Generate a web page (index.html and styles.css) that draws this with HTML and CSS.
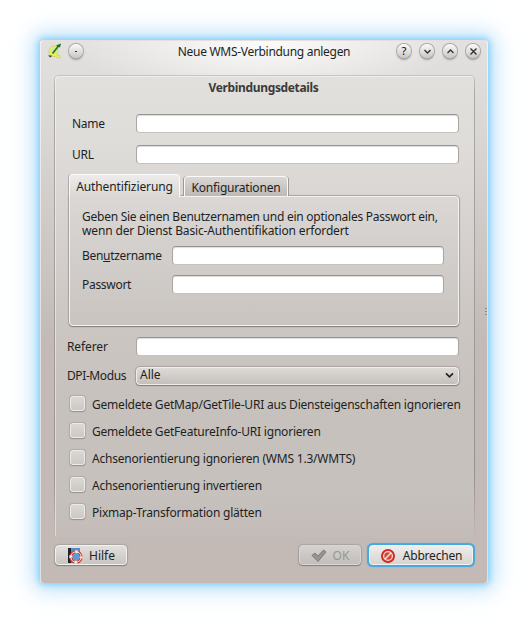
FILE: index.html
```html
<!DOCTYPE html>
<html lang="de">
<head>
<meta charset="utf-8">
<title>Neue WMS-Verbindung anlegen</title>
<link rel="stylesheet" href="styles.css">
</head>
<body>
<main class="window">
  <header class="titlebar">
    <svg class="app-icon" width="14" height="16" viewBox="0 0 14 16"><ellipse cx="5.500" cy="8.300" rx="3.300" ry="4.300" transform="rotate(20 5.500 8.300)" fill="none" stroke="#c3c960" stroke-width="3"/><path d="M6 10c1.500 2.500 3 5 6.500 3.500" fill="none" stroke="#c3c960" stroke-width="2.800"/><ellipse cx="5.500" cy="8.300" rx="3.300" ry="4.300" transform="rotate(20 5.500 8.300)" fill="#d9e8a0" stroke="#e6ee66" stroke-width="2"/><path d="M6 10c1.500 2.500 3 5 6.500 3.500" fill="none" stroke="#e6ee66" stroke-width="1.800"/><path d="M4.500 10.500 10.500 3" stroke="#1e7a2c" stroke-width="1.800"/><path d="M13 .5 8 2.500l4 2z" fill="#16702a"/><path d="M0 12.500h4l-1.500 2z" fill="#2c3a1c"/></svg>
    <span class="round pin"><i class="pin-dot"></i></span>
    <h1 class="title"><span>Neue WMS-Verbindung anlegen</span></h1>
    <span class="round"><b>?</b></span>
    <span class="round"><svg width="9" height="9" viewBox="0 0 9 9"><path d="M1.500 3 4.500 6l3-3"/></svg></span>
    <span class="round"><svg width="9" height="9" viewBox="0 0 9 9"><path d="m1.500 6 3-3 3 3"/></svg></span>
    <span class="round"><svg width="9" height="9" viewBox="0 0 9 9"><path d="m1.500 1.500 6 6m0-6-6 6"/></svg></span>
  </header>
  <section class="group">
    <h2 class="heading"><span>Verbindungsdetails</span></h2>
    <div class="row name"><label>Name</label><div class="field"></div></div>
    <div class="row url"><label>URL</label><div class="field"></div></div>
    <div class="tabs">
      <div class="tab active"><span>Authentifizierung</span></div>
      <div class="tab"><span>Konfigurationen</span></div>
    </div>
    <div class="panel">
      <p class="hint hint-one">Geben Sie einen Benutzernamen und ein optionales Passwort ein,</p>
      <p class="hint hint-two">wenn der Dienst Basic-Authentifikation erfordert</p>
      <div class="row user"><label>Ben<u>u</u>tzername</label><div class="field"></div></div>
      <div class="row pass"><label>Passwort</label><div class="field"></div></div>
    </div>
    <div class="row referer"><label>Referer</label><div class="field"></div></div>
    <div class="row dpi"><label>DPI-Modus</label><div class="combo"><span>Alle</span><svg width="9" height="7" viewBox="0 0 9 7"><path d="m1 1.300 3.500 3.500L8 1.300" fill="none" stroke="#222" stroke-width="1.700"/></svg></div></div>
    <div class="checks">
      <div class="check"><i></i><span>Gemeldete GetMap/GetTile-URI aus Diensteigenschaften ignorieren</span></div>
      <div class="check"><i></i><span>Gemeldete GetFeatureInfo-URI ignorieren</span></div>
      <div class="check"><i></i><span>Achsenorientierung ignorieren (WMS 1.3/WMTS)</span></div>
      <div class="check"><i></i><span>Achsenorientierung invertieren</span></div>
      <div class="check"><i></i><span>Pixmap-Transformation glätten</span></div>
    </div>
  </section>
  <footer class="buttons">
    <div class="button help"><svg width="16" height="16" viewBox="0 0 16 16"><path d="M1 0h12v15H1z" fill="#4d8fd0"/><path d="M1 0h3v15H1z" fill="#202328"/><circle cx="9" cy="9" r="5.200" fill="#5a9bd8" stroke="#d8402f" stroke-width="3"/><circle cx="9" cy="9" r="5.200" fill="none" stroke="#f7f1f0" stroke-width="3" stroke-dasharray="2.600 5.568" stroke-dashoffset="1.300"/><circle cx="9" cy="9" r="5.200" fill="none" stroke="#f3dcd8" stroke-width="1"/></svg><span>Hilfe</span></div>
    <div class="button ok"><svg width="16" height="14" viewBox="0 0 16 14"><path d="m1 6.500 3-2.500 3 3 5.500-6L15 3 7 12.500z" fill="#969492" stroke="#7d7b79"/></svg><span>OK</span></div>
    <div class="button cancel"><svg width="16" height="16" viewBox="0 0 16 16"><circle cx="8" cy="8" r="7" fill="#cf2b20"/><circle cx="8" cy="8" r="4.400" fill="#dc4436" stroke="#efdedc" stroke-width="1.300"/><path d="m4.800 11.200 6.400-6.400" stroke="#efdedc" stroke-width="1.600"/></svg><span>Abbrechen</span></div>
  </footer>
  <i class="grip"></i>
</main>
</body>
</html>
```
FILE: styles.css
```css
* { box-sizing: border-box; }
body { margin: 0; padding: 40px; width: 528px; height: 623px; background: #fff; overflow: hidden; font: 12px/14px "Noto Sans", "Open Sans", sans-serif; color: #221f1e; white-space: nowrap; }
.window { position: relative; width: 448px; height: 543px; border-radius: 4px; border: 1px solid rgba(255,255,255,.55); border-bottom: 0; background: radial-gradient(ellipse 190px 60px at 50% 0, rgba(255,255,255,.9), rgba(255,255,255,0)), linear-gradient(#e2e1df 0, #dedcda 50px, #c3bab6 300px, #c3bab6 100%); box-shadow: 0 0 6px 1px #7bcdf9, 0 0 16px 4px rgba(145,211,250,.6), 0 0 28px 8px rgba(175,215,250,.4); }
.titlebar { display: flex; align-items: flex-start; height: 34px; padding: 2px 6px 0 7px; }
.app-icon { flex: none; }
.title { flex: 1; margin: 0; padding-left: 55px; text-align: center; font-size: 12px; font-weight: 400; line-height: 17px; letter-spacing: -.3px; }
.round { flex: none; display: flex; align-items: center; justify-content: center; width: 14px; height: 14px; margin: 1px 1px 0 8px; border-radius: 50%; background: linear-gradient(#fafafa, #c9c7c5); box-shadow: 0 0 0 1px #a9a6a4, 0 2px 2px rgba(0,0,0,.3); }
.round.pin { margin-left: 7px; }
.round svg { fill: none; stroke: #333; stroke-width: 1.4; }
.round b { font-size: 11px; line-height: 14px; font-weight: 500; }
.pin-dot { width: 2px; height: 1px; background: #333; }
.group { width: 421px; height: 464px; margin-left: 13px; padding: 0 14px; border-radius: 5px; border: 1px solid transparent; background: linear-gradient(#e1e0dd 0, #dfddda 60px, #cdc7c4 240px, #c7c1bd 330px, #c6c1bd 420px, #c3bbb7 100%) padding-box, linear-gradient(#c5c4c2 0, #aaa7a5 20px, #969290 400px, #c3bab6 100%) border-box; box-shadow: inset 1px 1px 0 rgba(255,255,255,.45); }
.heading { margin: 4px 2px 0 0; text-align: center; font-size: 12px; line-height: 15px; font-weight: 700; letter-spacing: -.35px; color: #3c3a38; }
.row { display: flex; align-items: center; height: 19px; }
.row label { flex: none; letter-spacing: -.3px; }
.field { flex: 1; height: 19px; border: 1px solid #aaa6a3; border-top-color: #96928f; border-bottom-color: #c5c2bf; border-radius: 4px; background: #fff; box-shadow: inset 0 1px 1px #ddd; }
.name { margin: 19px 1px 0 3px; }
.url { margin: 12px 1px 0 3px; }
.name label, .url label { width: 64px; }
.tabs { display: flex; align-items: flex-end; height: 22px; margin: 10px 0 0; }
.tab { display: flex; justify-content: center; width: 104px; height: 20px; margin-left: 3px; padding-top: 4px; border: 1px solid #fafafa; border-bottom: 0; border-radius: 4px 4px 0 0; background: linear-gradient(#dad7d5, #bfb9b5); box-shadow: -1px 0 0 #9c9896, 1px 0 0 #9c9896; letter-spacing: -.2px; }
.tab.active { position: relative; width: 111px; height: 23px; margin: 0 1px -1px 0; padding-top: 5px; background: linear-gradient(#edecea, #dad7d4); box-shadow: -1px 0 0 #aaa; letter-spacing: -.1px; }
.panel { width: 390px; height: 130px; padding: 13px 14px 0 12px; border: 1px solid #f3f2f1; border-radius: 0 4px 4px; background: linear-gradient(#dad7d4, #c9c4c0); box-shadow: 0 1px 1px #858180, 0 0 1px 1px #a8a4a1; }
.hint { margin: 0; height: 14px; }
.hint-one { letter-spacing: -.25px; }
.hint-two { letter-spacing: -.15px; }
.user { margin-top: 8px; }
.pass { margin-top: 10px; }
.user label, .pass label { width: 90px; }
.referer { margin: 11px 1px 0 -2px; }
.dpi { margin: 10px 1px 0 -2px; height: 19px; }
.referer label { width: 69px; letter-spacing: -.1px; }
.dpi label { width: 69px; letter-spacing: -.4px; }
.combo { flex: 1; display: flex; align-items: center; justify-content: space-between; height: 18px; padding: 0 4px 1px 3px; border: 1px solid #eeedeb; border-radius: 4px; background: linear-gradient(#dddad7, #c5c0bb); box-shadow: 0 1px 1px #858180, 0 0 1px 1px #a8a4a1; }
.checks { margin-top: 6px; }
.check { display: flex; align-items: center; gap: 7px; height: 27px; padding-left: 1px; letter-spacing: -.21px; }
.check i { flex: none; width: 15px; height: 15px; margin-top: -3px; border: 1px solid #edebe9; border-radius: 3px; background: linear-gradient(#dbd8d4, #ccc8c4); box-shadow: 0 1px 1px #96918e, 0 0 1px 1px #b0aba8; }
.buttons { display: flex; margin: 6px 13px 0 14px; }
.button { display: flex; align-items: center; justify-content: center; height: 20px; padding-top: 1px; border: 1px solid #f2f1ef; border-radius: 4px; background: linear-gradient(#e2e0dd, #c9c5c1); box-shadow: 0 1px 1px #858180, 0 0 1px 1px #a8a4a1; }
.button span { margin-top: 1px; }
.button svg { flex: none; }
.help { width: 72px; gap: 6px; }
.ok { width: 62px; margin-left: 172px; gap: 6px; color: #999591; background: linear-gradient(#d5d1ce, #c3beba); border-color: #d8d5d2; }
.cancel { width: 104px; margin-left: 8px; gap: 7px; letter-spacing: -.2px; background: linear-gradient(#efeeed, #d7d4d1); box-shadow: 0 0 1px 1.5px #40a9e0; }
.grip { position: absolute; right: 0; top: 267px; width: 2px; height: 8px; background: repeating-linear-gradient(#888 0 1px, transparent 1px 3px); }
```
